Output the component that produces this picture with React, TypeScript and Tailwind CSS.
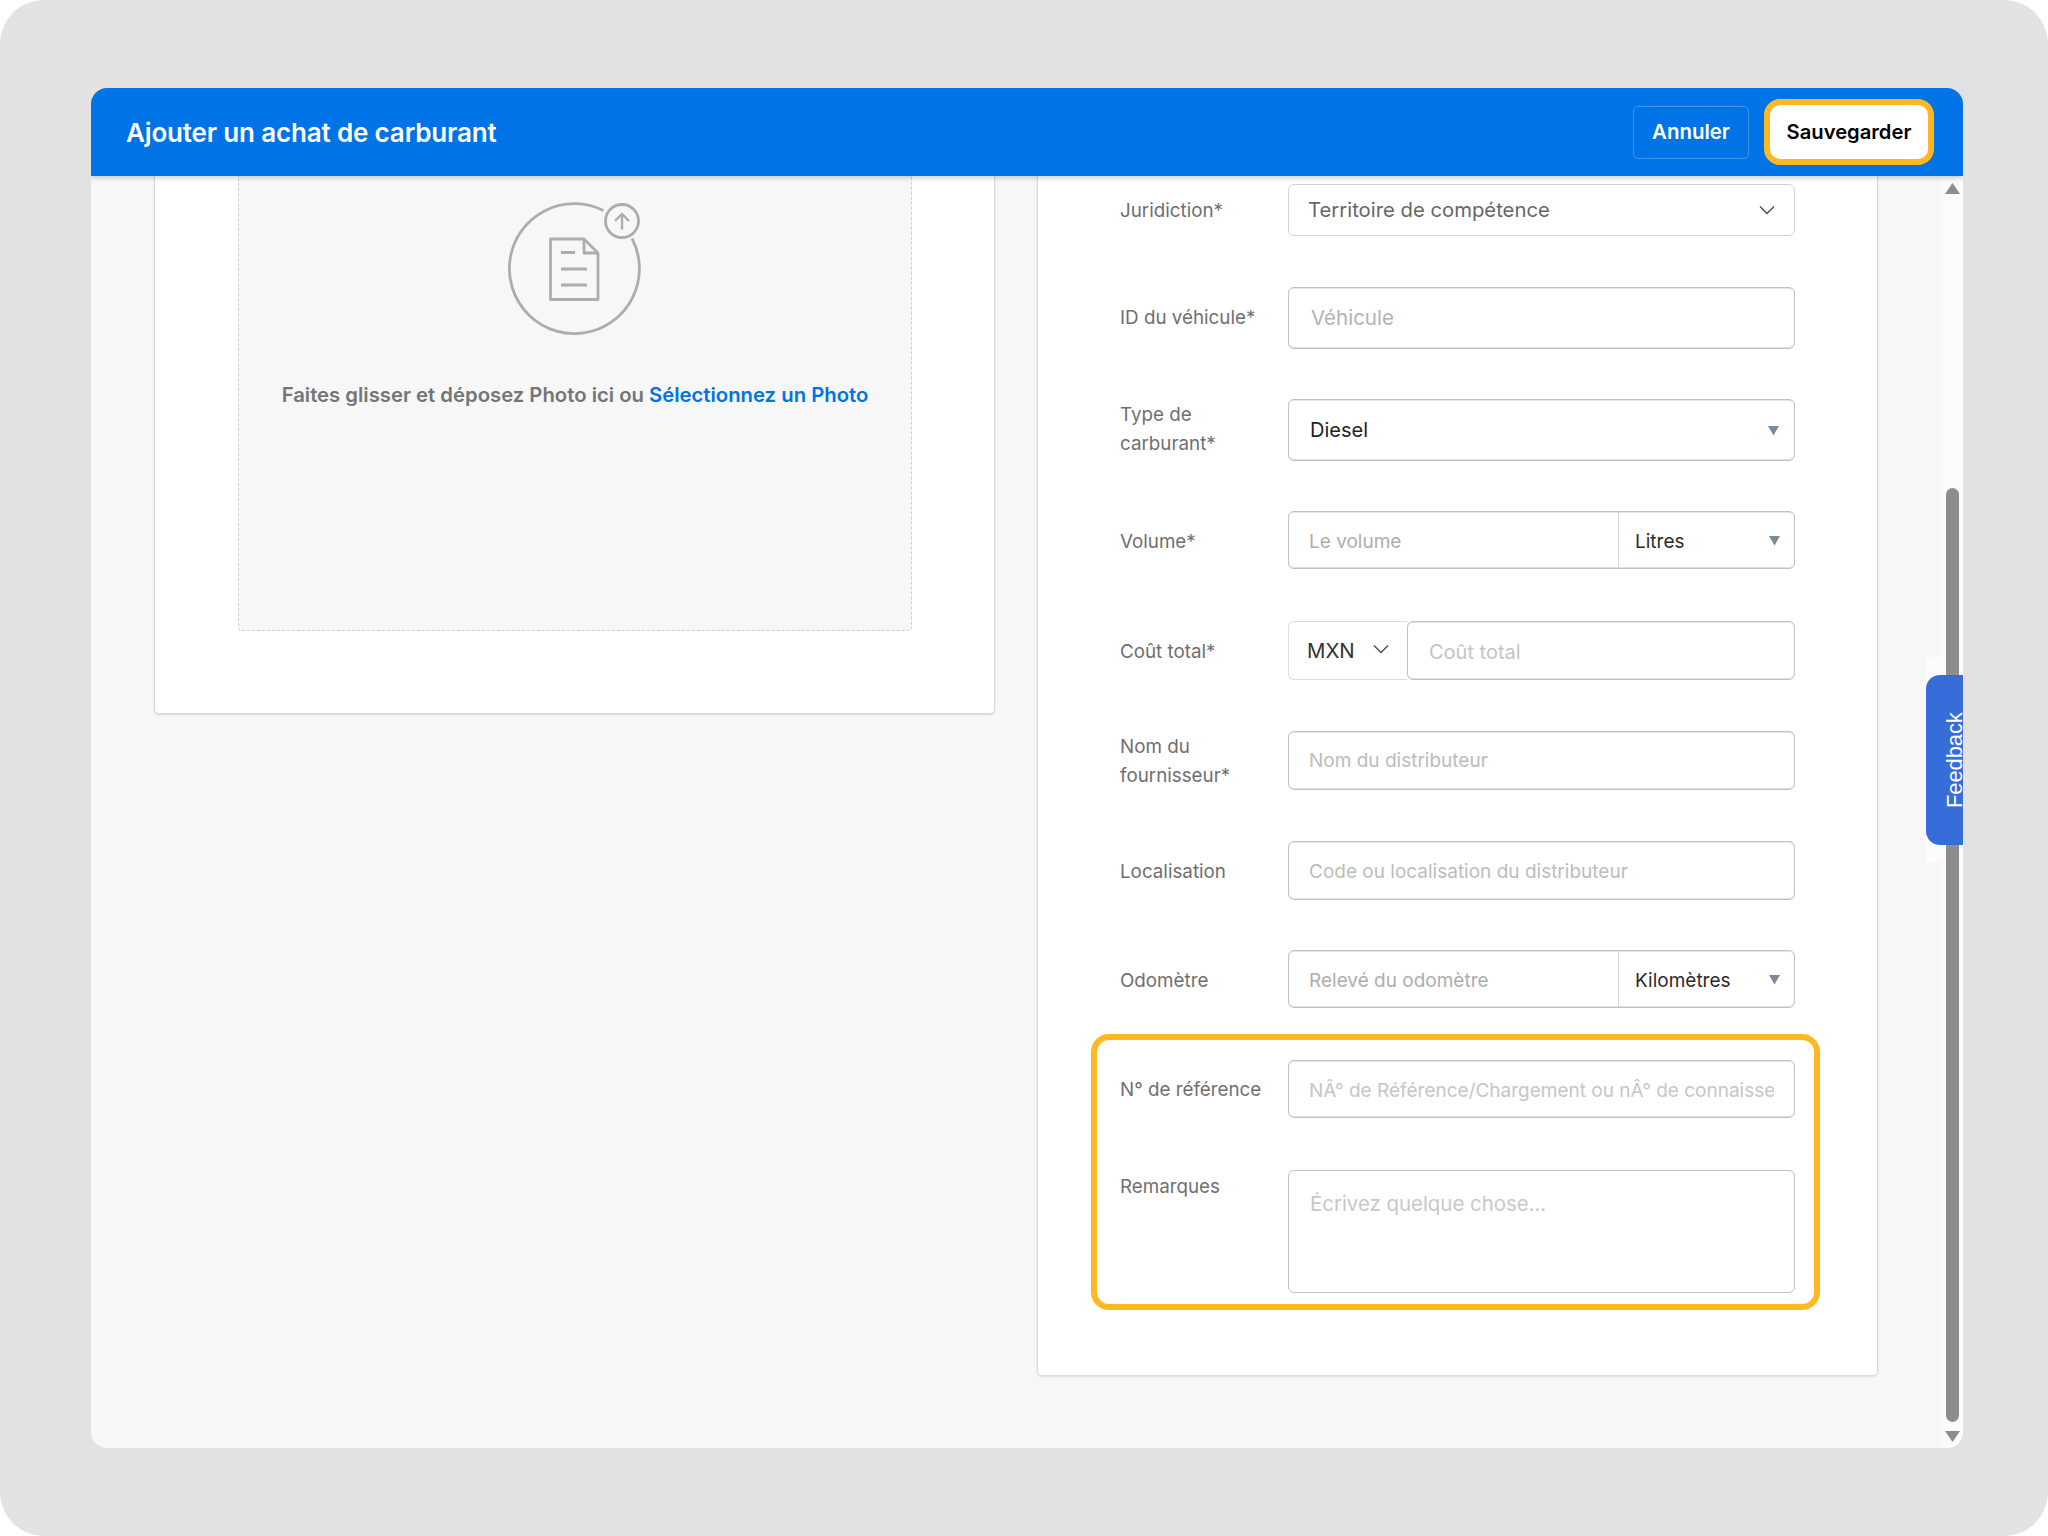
import type { ReactNode } from "react";

const inputBox =
  "border border-[#c2c2c2] rounded-[6px] bg-white shadow-[inset_0_1px_0_#e6e6e6,inset_0_-1px_0_#e0e0e0]";
const placeholder = "outline-none bg-transparent min-w-0";

const Chevron = () => (
  <svg width="18" height="18" viewBox="0 0 18 18" fill="none" stroke="#4b4b4b" strokeWidth="1.4">
    <path d="M2 5.5 L9 12.5 L16 5.5" />
  </svg>
);

const Triangle = () => (
  <svg width="11" height="11" viewBox="0 0 11 11" fill="#7c8b99">
    <path d="M0 1 H11 L5.5 10.5 Z" />
  </svg>
);

const Field = ({
  label,
  children,
  className = "",
  labelClass = "items-center",
}: {
  label: ReactNode;
  children: ReactNode;
  className?: string;
  labelClass?: string;
}) => (
  <div className={`flex ${className}`}>
    <div className={`w-[168px] shrink-0 flex text-[18.8px] leading-[29px] text-[#6f6f6f] ${labelClass}`}>
      <div>{label}</div>
    </div>
    <div className="w-[507px] shrink-0">{children}</div>
  </div>
);

const TextField = ({
  text,
  height,
  inner = "pl-5 pt-[2px] text-[19px]",
  tone = "placeholder:text-[#bcbcbc]",
}: {
  text: string;
  height: string;
  inner?: string;
  tone?: string;
}) => (
  <div className={`${inputBox} ${height} flex items-center pr-5 ${inner}`}>
    <input className={`${placeholder} ${tone} w-full`} placeholder={text} readOnly />
  </div>
);

const UnitField = ({ text, unit }: { text: string; unit: string }) => (
  <div className={`${inputBox} h-[58px] flex`}>
    <div className="w-[330px] flex items-center pl-5 pt-[4px] border-r border-[#d3dae2]">
      <input className={`${placeholder} placeholder:text-[#aeaeae] w-full text-[19px]`} placeholder={text} readOnly />
    </div>
    <div className="flex-1 flex items-center justify-between pl-4 pr-[14px] pt-[4px] text-[19px] text-[#2b2b2b]">
      <span>{unit}</span>
      <span className="-mt-[3px] flex">
        <Triangle />
      </span>
    </div>
  </div>
);

const UploadIcon = () => (
  <svg width="190" height="170" viewBox="0 0 190 170" fill="none" stroke="#adadad" strokeWidth="2.8">
    <path d="M123.5 30.5 A65 65 0 1 0 152 58.5" />
    <circle cx="142" cy="41" r="16.5" />
    <path d="M142 49.5 V34 M135 41 L142 34 L149 41" strokeWidth="2.4" />
    <path d="M70.5 59 H104 L118 73 V119.5 H70.5 Z" strokeLinejoin="round" />
    <path d="M104 59 V73 H118" strokeLinejoin="round" />
    <path d="M81 72.5 H95 M81 89 H107 M81 105 H107" />
  </svg>
);

export default function App() {
  return (
    <div className="w-[2048px] h-[1536px] bg-white font-['Inter',sans-serif]">
      <div className="w-full h-full bg-[#e2e2e2] rounded-[44px] pt-[88px] pl-[91px]">
        <div className="relative w-[1872px] h-[1360px] rounded-[16px] overflow-hidden bg-[#f7f7f7] flex flex-col">
          <header className="relative z-30 h-[88px] shrink-0 bg-[#0073e6] shadow-[0_2px_5px_rgba(0,0,0,0.2)] flex items-center justify-between pl-[35px] pr-[29px]">
            <h1 className="text-[26px] font-semibold text-white tracking-[-0.16px]">Ajouter un achat de carburant</h1>
            <div className="flex items-center gap-[15px]">
              <button className="h-[53px] w-[116px] rounded-[5px] border border-[#3f94ec] text-[20.4px] font-semibold text-white">
                Annuler
              </button>
              <button className="h-[66px] w-[170px] rounded-[16px] border-[6px] border-[#ffb81f] bg-white text-[20.2px] font-semibold text-black">
                Sauvegarder
              </button>
            </div>
          </header>

          <div className="flex flex-1 min-h-0">
            <div className="flex-1 flex items-start pl-[63px] gap-[42px]">
              <section className="w-[841px] h-[538px] bg-white border-x border-b border-[#dadada] rounded-b-[5px] shadow-[0_1px_2px_rgba(0,0,0,0.12)] pl-[83px]">
                <div className="w-[674px] h-[455px] bg-[#f7f7f7] border-x border-b border-dashed border-[#cfcfcf] rounded-b-[4px] flex flex-col items-center">
                  <div className="mt-[4px] flex">
                    <UploadIcon />
                  </div>
                  <p className="mt-[30px] text-[20.3px] font-semibold text-[#757575]">
                    Faites glisser et déposez Photo ici ou <span className="text-[#0073e6]">Sélectionnez un Photo</span>
                  </p>
                </div>
              </section>

              <section className="w-[841px] h-[1200px] bg-white border-x border-b border-[#dadada] rounded-b-[5px] shadow-[0_1px_2px_rgba(0,0,0,0.12)] pl-[82px] pt-2">
                <Field label="Juridiction*">
                  <div className="h-[52px] border border-[#d2d2d2] rounded-[6px] flex items-center justify-between pl-[19px] pr-[18px] text-[20.3px] text-[#666666]">
                    <span>Territoire de compétence</span>
                    <Chevron />
                  </div>
                </Field>

                <Field label="ID du véhicule*" className="mt-[51px]" labelClass="items-center pb-[2px]">
                  <TextField text="Véhicule" height="h-[62px]" inner="pl-[22px] text-[20.5px]" tone="placeholder:text-[#b3b3b3]" />
                </Field>

                <Field label={<>Type de<br />carburant*</>} className="mt-[50px]" labelClass="items-center pb-[2px]">
                  <div className={`${inputBox} h-[62px] flex items-center justify-between pl-[21px] pr-[15px] text-[20px] text-[#222222]`}>
                    <span>Diesel</span>
                    <Triangle />
                  </div>
                </Field>

                <Field label="Volume*" className="mt-[50px]" labelClass="items-center pt-[2px]">
                  <UnitField text="Le volume" unit="Litres" />
                </Field>

                <Field label="Coût total*" className="mt-[52px]" labelClass="items-center pt-[2px]">
                  <div className="flex h-[59px]">
                    <div className="w-[119px] border border-[#dddddd] border-r-0 rounded-l-[6px] flex items-center justify-between pl-[18px] pr-[17px] pt-[2px] text-[20.4px] text-[#333333]">
                      <span>MXN</span>
                      <span className="-mt-[6px] flex">
                        <Chevron />
                      </span>
                    </div>
                    <div className={`${inputBox} flex-1 flex items-center pl-[21px] pt-[2px]`}>
                      <input className={`${placeholder} placeholder:text-[#c4c4c4] w-full text-[20px]`} placeholder="Coût total" readOnly />
                    </div>
                  </div>
                </Field>

                <Field label={<>Nom du<br />fournisseur*</>} className="mt-[51px]">
                  <TextField text="Nom du distributeur" height="h-[59px]" />
                </Field>

                <Field label="Localisation" className="mt-[51px]" labelClass="items-center pt-[2px]">
                  <TextField text="Code ou localisation du distributeur" height="h-[59px]" inner="pl-5 pt-[4px] text-[19px]" />
                </Field>

                <Field label="Odomètre" className="mt-[50px]" labelClass="items-center pt-[2px]">
                  <UnitField text="Relevé du odomètre" unit="Kilomètres" />
                </Field>

                <div className="mt-[26px] -ml-[29px] w-[729px] h-[276px] border-[6px] border-[#ffb81f] rounded-[18px] pl-[23px] pt-[20px]">
                  <Field label="N° de référence" labelClass="items-center pt-[1px]">
                    <TextField
                      text="NÂ° de Référence/Chargement ou nÂ° de connaissement"
                      height="h-[58px]"
                      inner="pl-5 pt-[4px] text-[19px]"
                      tone="placeholder:text-[#c6c6c6]"
                    />
                  </Field>
                  <Field label="Remarques" className="mt-[52px]" labelClass="items-start pt-[2px]">
                    <div className="h-[123px] border border-[#c2c2c2] rounded-[6px] px-[21px] pt-[21px]">
                      <textarea
                        className={`${placeholder} placeholder:text-[#c8c8c8] w-full h-full resize-none text-[20.4px] leading-[24px]`}
                        placeholder="Écrivez quelque chose..."
                        readOnly
                      />
                    </div>
                  </Field>
                </div>
              </section>
            </div>

            <aside className="relative z-10 w-[22px] shrink-0 bg-[#fbfbfb] flex flex-col items-center">
              <svg className="mt-[7px]" width="15" height="11" viewBox="0 0 15 11" fill="#8d8d8d">
                <path d="M7.5 0 L15 11 H0 Z" />
              </svg>
              <div className="mt-[294px] w-[13px] h-[934px] rounded-full bg-[#8d8d8d]" />
              <svg className="mt-[9px]" width="15" height="11" viewBox="0 0 15 11" fill="#8d8d8d">
                <path d="M0 0 H15 L7.5 11 Z" />
              </svg>
            </aside>
          </div>

          <div className="absolute z-0 right-0 top-[569px] w-[37px] h-[205px] bg-[#fcfcfc]" />
          <div className="absolute z-20 right-0 top-[587px] w-[37px] h-[170px] bg-[#376dd9] rounded-l-[14px] overflow-hidden flex items-center justify-end">
            <span className="[writing-mode:vertical-rl] rotate-180 font-['Liberation_Sans',sans-serif] text-[21.8px] leading-[17px] h-[96px] text-white">
              Feedback
            </span>
          </div>
        </div>
      </div>
    </div>
  );
}
